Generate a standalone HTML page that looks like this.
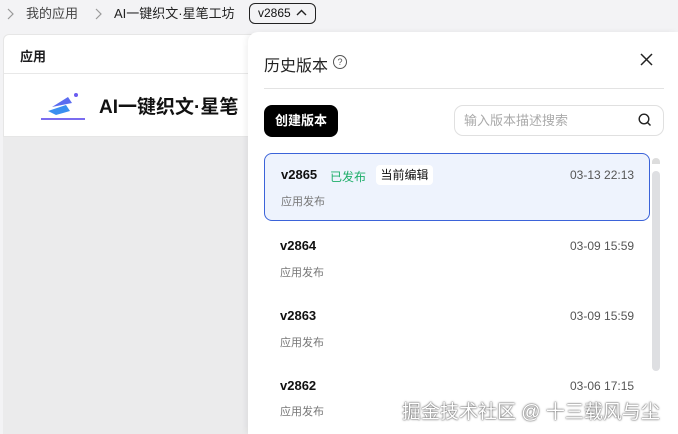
<!DOCTYPE html>
<html><head><meta charset="utf-8"><style>
*{margin:0;padding:0;box-sizing:border-box}
body{width:678px;height:434px;overflow:hidden;background:#f3f3f5;font-family:"Liberation Sans","Noto Sans CJK SC",sans-serif;position:relative;color:#1d1d1f}
.a{position:absolute}
.bc{top:5px;font-size:13px;color:#444;line-height:18px}
.ver{left:249px;top:3px;width:67px;height:21px;border:1px solid #222;border-radius:6px;font-size:12px;padding-left:8px;line-height:19px;color:#111}
.card{left:3px;top:34px;width:260px;height:103px;background:#fff;border:1px solid #e6e6e6;border-radius:6px 0 0 0}
.gray{left:3px;top:137px;width:250px;height:297px;background:#ebebec}
.panel{left:248px;top:32px;width:430px;height:402px;background:#fff;border-radius:10px 0 0 0;box-shadow:-2px 0 6px rgba(0,0,0,.06)}
.item{left:264px;width:386px;height:68px;border-radius:8px}
.v{font-size:13px;font-weight:bold;color:#111}
.d{font-size:12px;color:#555}
.s{font-size:11px;color:#777}
</style></head><body>
<svg class="a" style="left:6px;top:8px" width="8" height="12"><path d="M2 1L7 6L2 11" stroke="#999" stroke-width="1.2" fill="none"/></svg>
<div class="a bc" style="left:26px">我的应用</div>
<svg class="a" style="left:94px;top:8px" width="8" height="12"><path d="M2 1L7 6L2 11" stroke="#999" stroke-width="1.2" fill="none"/></svg>
<div class="a bc" style="left:114px;color:#222">AI一键织文·星笔工坊</div>
<div class="a ver">v2865</div>
<svg class="a" style="left:296px;top:9px" width="11" height="8"><path d="M1 6L5.5 1.5L10 6" stroke="#222" stroke-width="1.4" fill="none"/></svg>
<div class="a card">
 <div class="a" style="left:0;top:0;width:260px;height:39px;border-bottom:1px solid #e8e8e8"></div>
 <div class="a" style="left:16px;top:11px;font-size:13px;font-weight:bold">应用</div>
 <svg class="a" style="left:34px;top:50px" width="52" height="38"><path d="M14 22 L30 12 L34 18 Z" fill="#5b6cf0"/><path d="M10 26 L28 20 L32 26 L18 30 Z" fill="#3a8ff0"/><circle cx="38" cy="10" r="2" fill="#6a5cf0"/><rect x="3" y="33" width="44" height="2" fill="#7a6cf0"/></svg>
 <div class="a" style="left:95px;top:57px;font-size:19px;font-weight:bold;color:#111;white-space:nowrap">AI一键织文·星笔</div>
</div>
<div class="a gray"></div>
<div class="a panel"></div>
<div class="a" style="left:264px;top:52px;font-size:16px;color:#222">历史版本</div>
<div class="a" style="left:333px;top:55px;width:14px;height:14px;border:1px solid #555;border-radius:50%;font-size:9px;text-align:center;line-height:12px;color:#555">?</div>
<svg class="a" style="left:640px;top:53px" width="13" height="13"><path d="M1 1L12 12M12 1L1 12" stroke="#222" stroke-width="1.5"/></svg>
<div class="a" style="left:264px;top:88px;width:400px;height:1px;background:#e3e3e3"></div>
<div class="a" style="left:264px;top:105px;width:74px;height:32px;background:#000;border-radius:8px;color:#fff;font-size:13px;font-weight:bold;text-align:center;line-height:32px">创建版本</div>
<div class="a" style="left:454px;top:105px;width:210px;height:31px;border:1px solid #e0e0e0;border-radius:9px;font-size:13px;color:#aaa;padding-left:9px;line-height:29px">输入版本描述搜索</div>
<svg class="a" style="left:638px;top:113px" width="14" height="14"><circle cx="6" cy="6" r="4.8" stroke="#222" stroke-width="1.4" fill="none"/><path d="M9.5 9.5L12.5 12.5" stroke="#222" stroke-width="1.4"/></svg>
<div class="a item" style="top:153px;background:#eef3fd;border:1px solid #3b63d9"></div>
<div class="a v" style="left:281px;top:167px">v2865</div>
<div class="a" style="left:330px;top:168px;font-size:12px;color:#1fae6a">已发布</div>
<div class="a" style="left:376px;top:165px;width:57px;height:20px;background:#fff;border-radius:4px;font-size:12px;text-align:center;line-height:20px;color:#111">当前编辑</div>
<div class="a d" style="left:570px;top:168px">03-13 22:13</div>
<div class="a s" style="left:281px;top:193px">应用发布</div>
<div class="a v" style="left:280px;top:238px">v2864</div><div class="a d" style="left:570px;top:239px">03-09 15:59</div><div class="a s" style="left:280px;top:264px">应用发布</div>
<div class="a v" style="left:280px;top:308px">v2863</div><div class="a d" style="left:570px;top:309px">03-09 15:59</div><div class="a s" style="left:280px;top:334px">应用发布</div>
<div class="a v" style="left:280px;top:378px">v2862</div><div class="a d" style="left:570px;top:379px">03-06 17:15</div><div class="a s" style="left:280px;top:403px">应用发布</div>
<div class="a" style="left:652px;top:158px;width:8px;height:6px;background:#ddd;border-radius:4px 4px 0 0"></div>
<div class="a" style="left:652px;top:171px;width:8px;height:200px;background:#dedfe2;border-radius:4px"></div>
<div class="a" style="left:402px;top:397px;font-size:19px;color:#fff;text-shadow:0 0 2px #555,0 0 1px #555;white-space:nowrap">掘金技术社区 @ 十三载风与尘</div>
</body></html>
